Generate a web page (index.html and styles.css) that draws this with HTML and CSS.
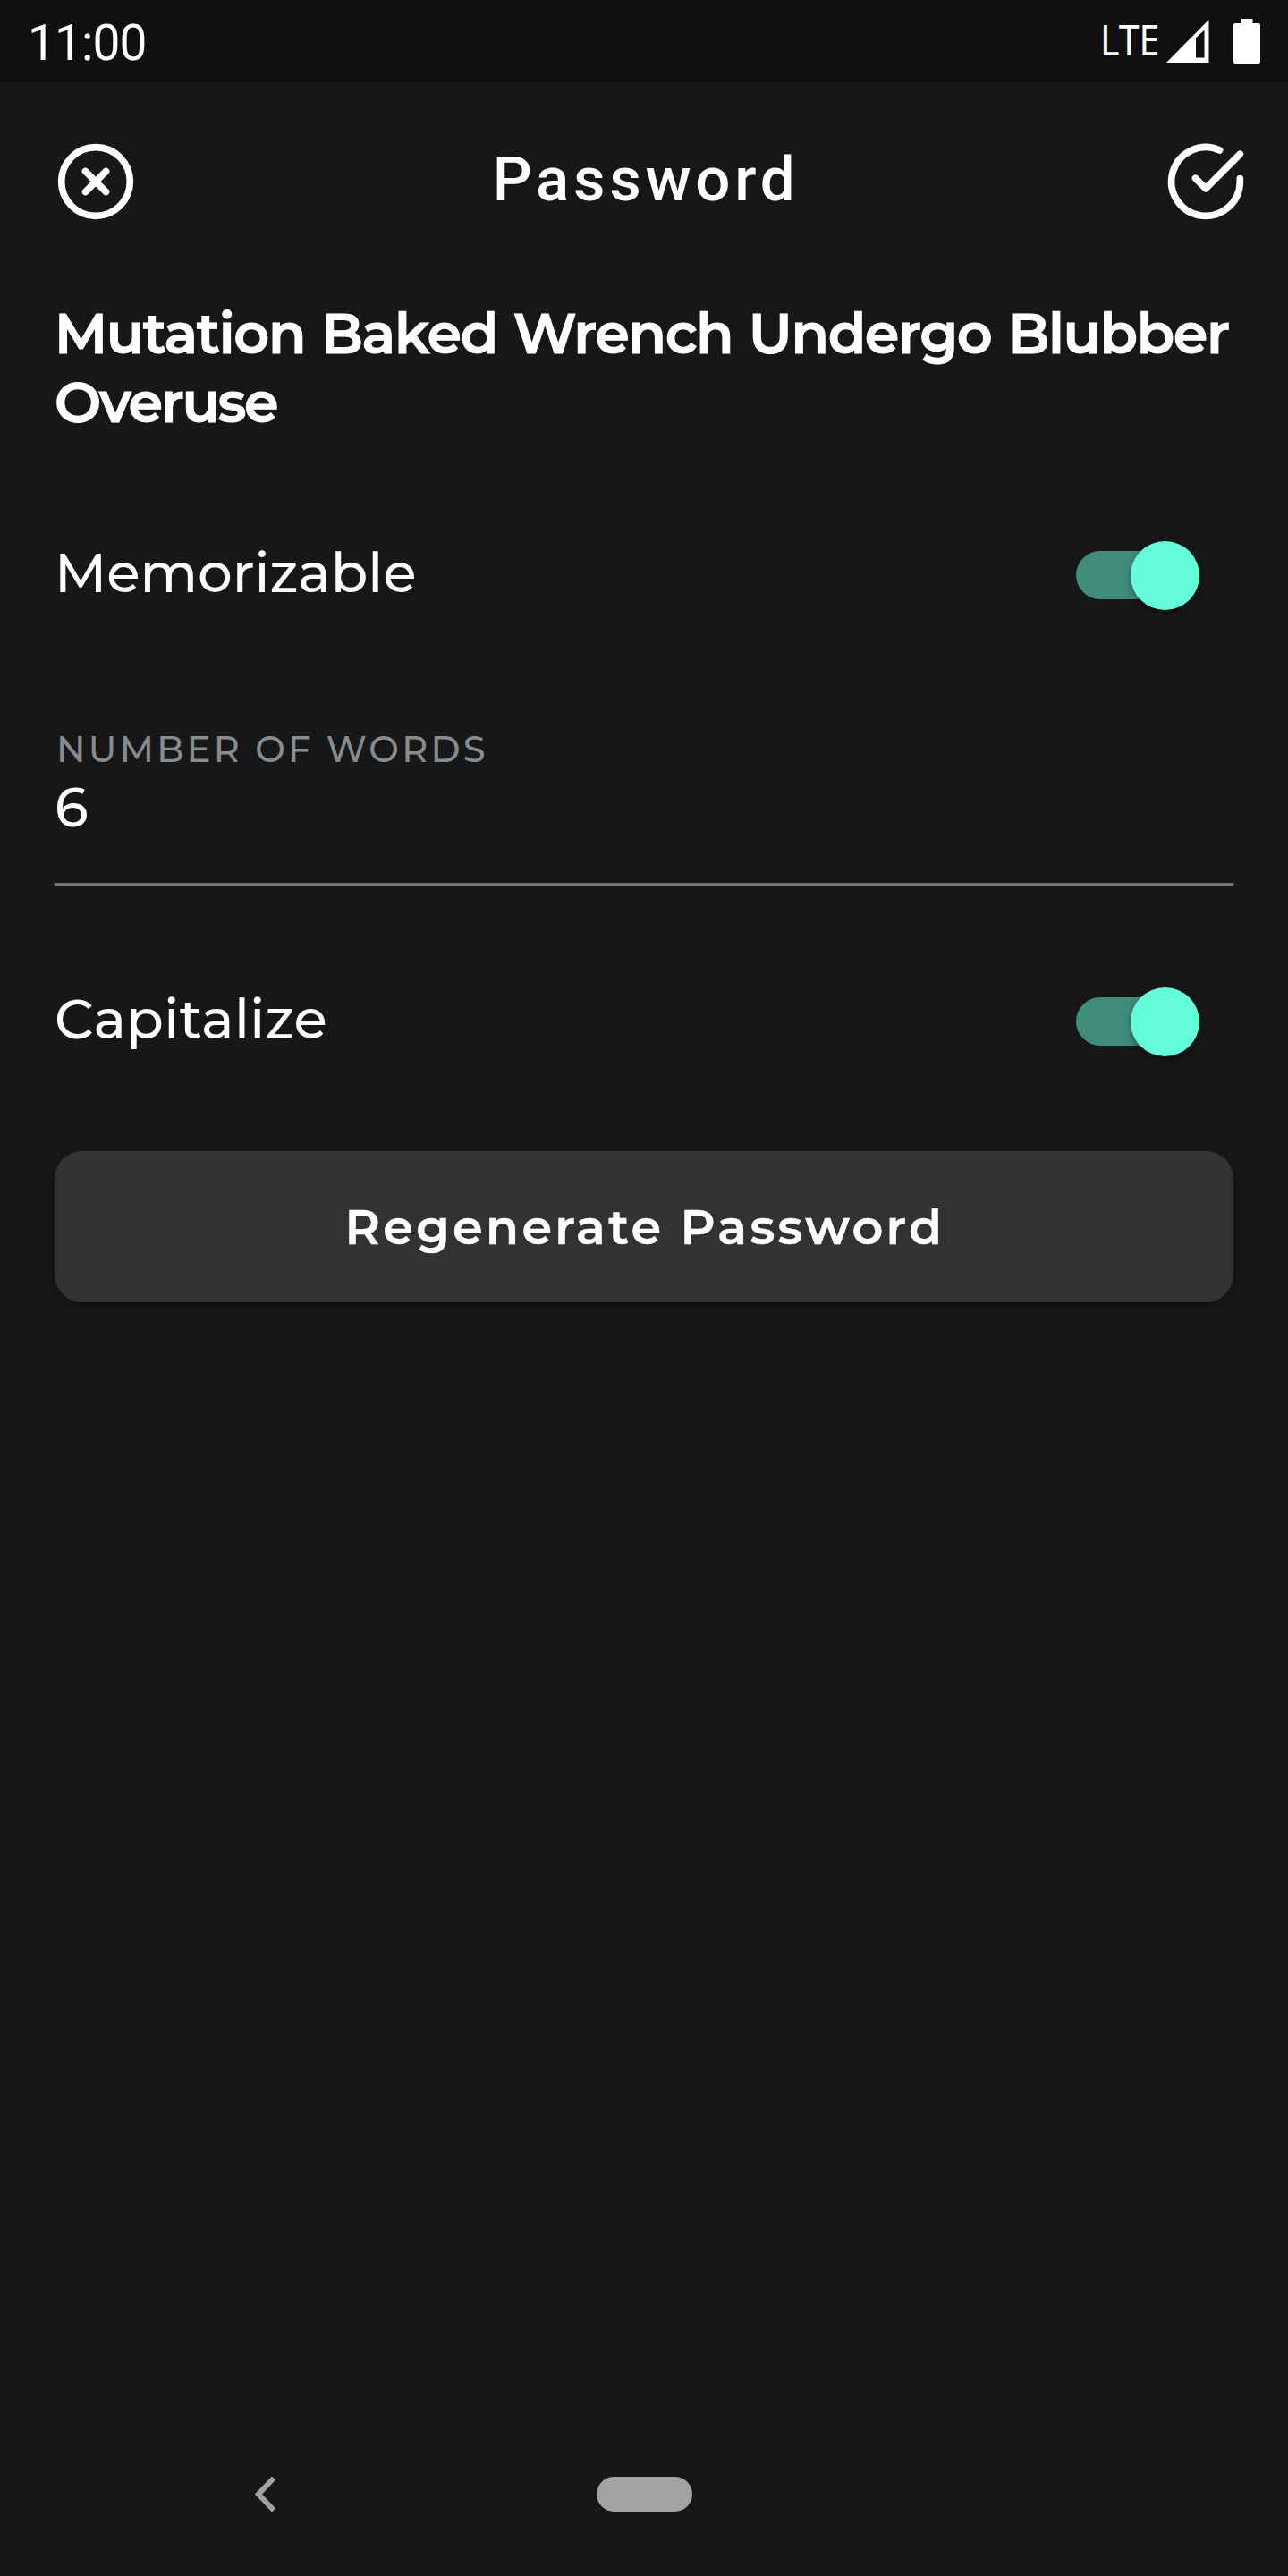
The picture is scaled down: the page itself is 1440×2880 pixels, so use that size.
FILE: index.html
```html
<!DOCTYPE html>
<html lang="en">
<head>
<meta charset="utf-8">
<title>Password</title>
<link rel="stylesheet" href="styles.css">
</head>
<body>
<div class="screen">
  <div class="status-bar">
    <span class="clock">11:00</span>
    <svg class="status-icons" width="180" height="60" viewBox="0 0 180 60" fill="#fff">
      <text class="network" x="0" y="46.3" textLength="66.500" lengthAdjust="spacingAndGlyphs">LTE</text>
      <path fill-rule="evenodd" d="M74 54 121.500 6V54ZM107 26.500V48.500H116.500V17.500Z"/>
      <path d="M158 5h12.500v5h6.500a2 2 0 0 1 2 2v41a2 2 0 0 1-2 2h-26a2 2 0 0 1-2-2V12a2 2 0 0 1 2-2h7z"/>
    </svg>
  </div>

  <header class="app-bar">
    <svg class="icon" viewBox="0 0 24 24"><circle cx="12" cy="12" r="10"/><path d="m15 9-6 6M9 9l6 6"/></svg>
    <h1 class="title">Password</h1>
    <svg class="icon" viewBox="0 0 24 24"><path d="M22 11.080V12a10 10 0 1 1-5.930-9.140"/><path d="M22 4 12 14.010l-3-3"/></svg>
  </header>

  <main class="content">
    <p class="password">Mutation Baked Wrench Undergo Blubber <span class="last-word">Overuse</span></p>

    <div class="row">
      <span class="row-label">Memorizable</span>
      <span class="switch"><span class="thumb"></span></span>
    </div>

    <div class="field">
      <span class="field-label">NUMBER OF WORDS</span>
      <span class="field-value">6</span>
    </div>

    <div class="row">
      <span class="row-label capitalize">Capitalize</span>
      <span class="switch"><span class="thumb"></span></span>
    </div>

    <button class="button">Regenerate Password</button>
  </main>

  <nav class="nav-bar">
    <svg class="back" width="24" height="46" viewBox="0 0 24 46"><path d="M21 5.500 4 23.500l17 18"/></svg>
    <span class="home"></span>
  </nav>
</div>
</body>
</html>
```
FILE: styles.css
```css
* { box-sizing: border-box; }

body {
  margin: 0;
  background: #161719;
  color: #fff;
  font-family: Montserrat, Inter, sans-serif;
}

.screen {
  width: 1440px;
  height: 2880px;
  display: flex;
  flex-direction: column;
}

.status-bar {
  height: 92px;
  padding: 0 30px 0 31px;
  display: flex;
  align-items: center;
  justify-content: space-between;
  background: #0f0f11;
}

.status-icons { overflow: visible; }

.clock {
  padding-top: 4px;
  font: 400 55px/60px Roboto, sans-serif;
  letter-spacing: -0.9px;
}

.network { font: 400 47px "Noto Sans", sans-serif; }

.app-bar {
  height: 220px;
  padding: 1px 46px 0 61px;
  display: flex;
  align-items: center;
  justify-content: space-between;
}

.icon {
  width: 92px;
  height: 92px;
  fill: none;
  stroke: #fff;
  stroke-width: 2;
  stroke-linecap: round;
  stroke-linejoin: round;
}

.title {
  margin: 0;
  padding: 0 11px 3px 0;
  font: 500 69px/80px Roboto, sans-serif;
  letter-spacing: 4.72px;
}

.content {
  flex: 1;
  padding: 23px 61px 0;
  display: flex;
  flex-direction: column;
}

.password {
  height: 154px;
  margin: 0 -20px 104px 0;
  font-size: 62px;
  font-weight: 600;
  line-height: 77px;
  letter-spacing: -1.35px;
  word-spacing: 2px;
  -webkit-text-stroke: 1px #fff;
}

.last-word { letter-spacing: -2.3px; }

.row {
  height: 100px;
  padding-right: 38px;
  display: flex;
  align-items: center;
  justify-content: space-between;
}

.row-label {
  padding-bottom: 6px;
  font-size: 61px;
  font-weight: 500;
  line-height: 80px;
}

.capitalize { letter-spacing: 0.4px; }

.switch {
  width: 138px;
  height: 54px;
  display: flex;
  align-items: center;
  justify-content: flex-end;
  border-radius: 27px;
  background: linear-gradient(90deg, #3e8d7b 0 110px, transparent 110px);
}

.thumb {
  width: 77px;
  height: 77px;
  flex: none;
  border-radius: 50%;
  background: #64ffda;
  box-shadow: 0 4px 9px rgba(0, 0, 0, 0.35);
}

.field {
  height: 179px;
  margin: 119px 0 101px;
  display: flex;
  flex-direction: column;
  border-bottom: 4px solid #6f6f72;
}

.field-label {
  padding: 1px 0 0 2px;
  font-size: 40px;
  font-weight: 500;
  line-height: 49px;
  letter-spacing: 3.28px;
  color: #8a8b8c;
}

.field-value {
  font-size: 61px;
  font-weight: 500;
  line-height: 80px;
}

.button {
  height: 169px;
  margin: 95px 0 0;
  padding: 1px 0 0 2px;
  border: 0;
  border-radius: 31px;
  background: linear-gradient(#353637, #313233 16px);
  box-shadow: 0 4px 9px rgba(0, 0, 0, 0.3);
  color: inherit;
  font: 600 54px/70px Montserrat, Inter, sans-serif;
  letter-spacing: 3.34px;
  -webkit-text-stroke: 0.5px #fff;
}

.nav-bar {
  height: 184px;
  padding: 0 666px 0 285px;
  display: flex;
  align-items: center;
  justify-content: space-between;
}

.back {
  fill: none;
  stroke: #a1a2a3;
  stroke-width: 6;
}

.home {
  width: 107px;
  height: 39px;
  border-radius: 20px;
  background: #a1a2a3;
}
```
